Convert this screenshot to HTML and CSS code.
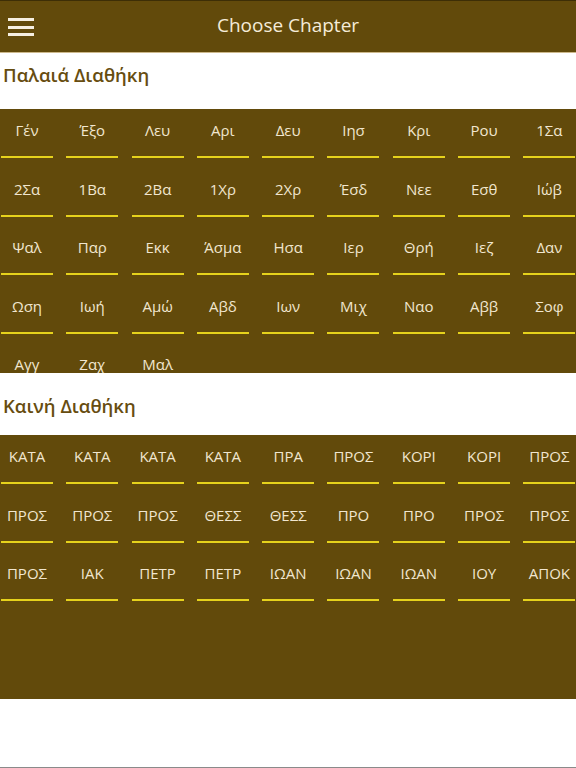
FILE: index.html
```html
<!DOCTYPE html>
<html lang="el">
<head>
<meta charset="utf-8">
<title>Choose Chapter</title>
<link rel="stylesheet" href="styles.css">
</head>
<body>
<div class="page">
  <header class="topbar">
    <button class="menu" aria-label="Menu">
      <span class="bar"></span><span class="bar"></span><span class="bar"></span>
    </button>
    <h1 class="topbar-title">Choose Chapter</h1>
  </header>

  <h2 class="section-title first">Παλαιά Διαθήκη</h2>
  <div class="book-grid">
    <div class="book"><span class="label">Γέν</span></div>
    <div class="book"><span class="label">Έξο</span></div>
    <div class="book"><span class="label">Λευ</span></div>
    <div class="book"><span class="label">Αρι</span></div>
    <div class="book"><span class="label">Δευ</span></div>
    <div class="book"><span class="label">Ιησ</span></div>
    <div class="book"><span class="label">Κρι</span></div>
    <div class="book"><span class="label">Ρου</span></div>
    <div class="book"><span class="label">1Σα</span></div>
    <div class="book"><span class="label">2Σα</span></div>
    <div class="book"><span class="label">1Βα</span></div>
    <div class="book"><span class="label">2Βα</span></div>
    <div class="book"><span class="label">1Χρ</span></div>
    <div class="book"><span class="label">2Χρ</span></div>
    <div class="book"><span class="label">Έσδ</span></div>
    <div class="book"><span class="label">Νεε</span></div>
    <div class="book"><span class="label">Εσθ</span></div>
    <div class="book"><span class="label">Ιώβ</span></div>
    <div class="book"><span class="label">Ψαλ</span></div>
    <div class="book"><span class="label">Παρ</span></div>
    <div class="book"><span class="label">Εκκ</span></div>
    <div class="book"><span class="label">Άσμα</span></div>
    <div class="book"><span class="label">Ησα</span></div>
    <div class="book"><span class="label">Ιερ</span></div>
    <div class="book"><span class="label">Θρή</span></div>
    <div class="book"><span class="label">Ιεζ</span></div>
    <div class="book"><span class="label">Δαν</span></div>
    <div class="book"><span class="label">Ωση</span></div>
    <div class="book"><span class="label">Ιωή</span></div>
    <div class="book"><span class="label">Αμώ</span></div>
    <div class="book"><span class="label">Αβδ</span></div>
    <div class="book"><span class="label">Ιων</span></div>
    <div class="book"><span class="label">Μιχ</span></div>
    <div class="book"><span class="label">Ναο</span></div>
    <div class="book"><span class="label">Αββ</span></div>
    <div class="book"><span class="label">Σοφ</span></div>
    <div class="book"><span class="label">Αγγ</span></div>
    <div class="book"><span class="label">Ζαχ</span></div>
    <div class="book"><span class="label">Μαλ</span></div>
  </div>

  <h2 class="section-title second">Καινή Διαθήκη</h2>
  <div class="book-grid">
    <div class="book"><span class="label">ΚΑΤΑ</span></div>
    <div class="book"><span class="label">ΚΑΤΑ</span></div>
    <div class="book"><span class="label">ΚΑΤΑ</span></div>
    <div class="book"><span class="label">ΚΑΤΑ</span></div>
    <div class="book"><span class="label">ΠΡΑ</span></div>
    <div class="book"><span class="label">ΠΡΟΣ</span></div>
    <div class="book"><span class="label">ΚΟΡΙ</span></div>
    <div class="book"><span class="label">ΚΟΡΙ</span></div>
    <div class="book"><span class="label">ΠΡΟΣ</span></div>
    <div class="book"><span class="label">ΠΡΟΣ</span></div>
    <div class="book"><span class="label">ΠΡΟΣ</span></div>
    <div class="book"><span class="label">ΠΡΟΣ</span></div>
    <div class="book"><span class="label">ΘΕΣΣ</span></div>
    <div class="book"><span class="label">ΘΕΣΣ</span></div>
    <div class="book"><span class="label">ΠΡΟ</span></div>
    <div class="book"><span class="label">ΠΡΟ</span></div>
    <div class="book"><span class="label">ΠΡΟΣ</span></div>
    <div class="book"><span class="label">ΠΡΟΣ</span></div>
    <div class="book"><span class="label">ΠΡΟΣ</span></div>
    <div class="book"><span class="label">ΙΑΚ</span></div>
    <div class="book"><span class="label">ΠΕΤΡ</span></div>
    <div class="book"><span class="label">ΠΕΤΡ</span></div>
    <div class="book"><span class="label">ΙΩΑΝ</span></div>
    <div class="book"><span class="label">ΙΩΑΝ</span></div>
    <div class="book"><span class="label">ΙΩΑΝ</span></div>
    <div class="book"><span class="label">ΙΟΥ</span></div>
    <div class="book"><span class="label">ΑΠΟΚ</span></div>
  </div>
</div>
</body>
</html>
```

FILE: styles.css
```css
html, body {
  margin: 0;
  padding: 0;
  background: #ffffff;
}

.page {
  height: 768px;
  box-sizing: border-box;
  border-bottom: 1px solid #8a8a8a;
  overflow: hidden;
  font-family: "Open Sans", "Noto Sans", "DejaVu Sans", sans-serif;
}

.topbar {
  height: 53px;
  box-sizing: border-box;
  background: #624a0b;
  border-top: 1px solid #3d2e06;
  border-bottom: 1px solid #cdb98c;
  display: flex;
  align-items: center;
  justify-content: center;
  position: relative;
}

.menu {
  position: absolute;
  left: 8px;
  top: 17px;
  width: 26px;
  height: 18px;
  padding: 0;
  border: 0;
  background: transparent;
  display: flex;
  flex-direction: column;
  justify-content: space-between;
}

.bar {
  display: block;
  width: 26px;
  height: 3px;
  background: #f6efe1;
}

.topbar-title {
  margin: 0;
  font-size: 19px;
  font-weight: 400;
  line-height: 26px;
  color: #f5ecd9;
  padding-bottom: 4px;
}

.section-title {
  margin: 0;
  box-sizing: border-box;
  padding-left: 3px;
  font-size: 18.5px;
  line-height: 28px;
  font-weight: 600;
  color: #674d10;
}

.section-title.first {
  height: 56px;
  padding-top: 8px;
}

.section-title.second {
  height: 62px;
  padding-top: 19px;
}

.book-grid {
  height: 264px;
  overflow: hidden;
  background: #624a0b;
  display: grid;
  grid-template-columns: repeat(9, 52px);
  grid-auto-rows: 58.5px;
  column-gap: 13.3px;
  padding-left: 1px;
}

.book {
  display: flex;
  flex-direction: column;
}

.label {
  display: block;
  box-sizing: border-box;
  height: 49px;
  padding-top: 11px;
  line-height: 20px;
  font-size: 15px;
  text-align: center;
  white-space: nowrap;
  color: #f1e6cf;
  border-bottom: 2px solid #e6d21c;
}
```
